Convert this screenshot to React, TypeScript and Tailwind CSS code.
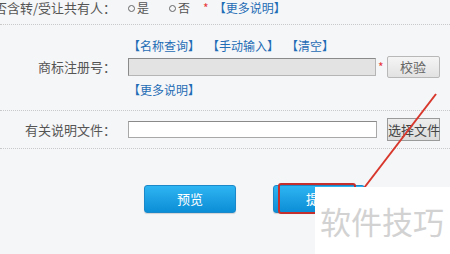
export default function App() {
  return (
    <div className="relative w-[450px] h-[254px] overflow-hidden bg-[#f5f6f8] text-[#555] font-['Noto_Sans_CJK_SC','Microsoft_YaHei',sans-serif]">
      {/* Row 1 */}
      <div className="flex h-[25px] border-b border-dotted border-[#c9c9c9]">
        <div className="w-[116px] shrink-0 flex justify-end whitespace-nowrap text-[13px] leading-[15px]">
          是否含转/受让共有人：
        </div>
        <div className="pl-[12px] flex items-start text-[12px] leading-[15px] whitespace-nowrap">
          <span className="flex items-center">
            <span className="mt-[1px] w-[7px] h-[7px] rounded-full border border-[#666] mr-[2px]" />
            是
          </span>
          <span className="flex items-center ml-[20px]">
            <span className="mt-[1px] w-[7px] h-[7px] rounded-full border border-[#666] mr-[2px]" />
            否
          </span>
          <span className="ml-[13px] text-[#e8393a]">*</span>
          <span className="ml-[5px] text-[#1f6db5]">【更多说明】</span>
        </div>
      </div>

      {/* Row 2 */}
      <div className="pt-[13px] pb-[12px] border-b border-dotted border-[#c9c9c9]">
        <div className="flex pl-[128px] gap-[7px] text-[12px] leading-[16px] text-[#1f6db5] whitespace-nowrap">
          <span>【名称查询】</span>
          <span>【手动输入】</span>
          <span>【清空】</span>
        </div>
        <div className="mt-[2px] flex items-center">
          <div className="w-[116px] shrink-0 flex justify-end whitespace-nowrap text-[13px] leading-[16px]">
            商标注册号：
          </div>
          <div className="ml-[12px] w-[248px] h-[18px] bg-[#e3e3e3] border border-[#b5b5b5] border-t-[#8a8a8a] border-l-[#8a8a8a]" />
          <span className="ml-[2px] text-[#e8393a] text-[12px] leading-[12px]">*</span>
          <button className="ml-[3px] w-[53px] h-[22px] rounded-[2px] border border-[#b8b8b8] bg-gradient-to-b from-[#f5f5f5] to-[#e2e2e2] text-[13px] leading-[20px] text-[#666]">
            校验
          </button>
        </div>
        <div className="mt-[4px] pl-[128px] text-[12px] leading-[16px] text-[#1f6db5] whitespace-nowrap">
          【更多说明】
        </div>
      </div>

      {/* Row 3 */}
      <div className="h-[38px] flex items-center border-b border-dotted border-[#c9c9c9]">
        <div className="w-[116px] shrink-0 flex justify-end whitespace-nowrap text-[13px] leading-[16px]">
          有关说明文件：
        </div>
        <div className="ml-[12px] w-[249px] h-[17px] bg-white border border-[#a8a8a8] border-t-[#8a8a8a]" />
        <button className="ml-[10px] w-[53px] h-[23px] border border-[#9a9a9a] bg-gradient-to-b from-[#ededed] to-[#dcdcdc] text-[13px] leading-[21px] text-[#444] whitespace-nowrap px-0">
          选择文件
        </button>
      </div>

      {/* Buttons */}
      <div className="pt-[36px] pl-[144px] flex gap-[37px]">
        <button className="w-[92px] h-[28px] rounded-[3px] border border-[#1b88c9] bg-gradient-to-b from-[#2db4f2] to-[#0a8ed6] text-white text-[13px] leading-[26px] shadow-[0_1px_1px_rgba(0,0,0,0.15)]">
          预览
        </button>
        <button className="w-[92px] h-[28px] rounded-[3px] border border-[#1b88c9] bg-gradient-to-b from-[#2db4f2] to-[#0a8ed6] text-white text-[13px] leading-[26px] shadow-[0_1px_1px_rgba(0,0,0,0.15)]">
          提交
        </button>
      </div>

      {/* Annotation overlays */}
      <div className="absolute left-[278px] top-[183px] w-[78px] h-[31px] border-2 border-[#c4302d] rounded-[3px]" />
      <svg className="absolute left-0 top-0" width="450" height="254" viewBox="0 0 450 254">
        <line x1="436" y1="94" x2="364" y2="188" stroke="#d8372c" strokeWidth="2" />
      </svg>
      <div className="absolute left-[315px] top-[187px] right-0 bottom-0 bg-white">
        <div className="pl-[5px] pt-[18px] text-[31px] leading-[31px] text-[#d2d2d2] whitespace-nowrap">
          软件技巧
        </div>
      </div>
    </div>
  );
}
